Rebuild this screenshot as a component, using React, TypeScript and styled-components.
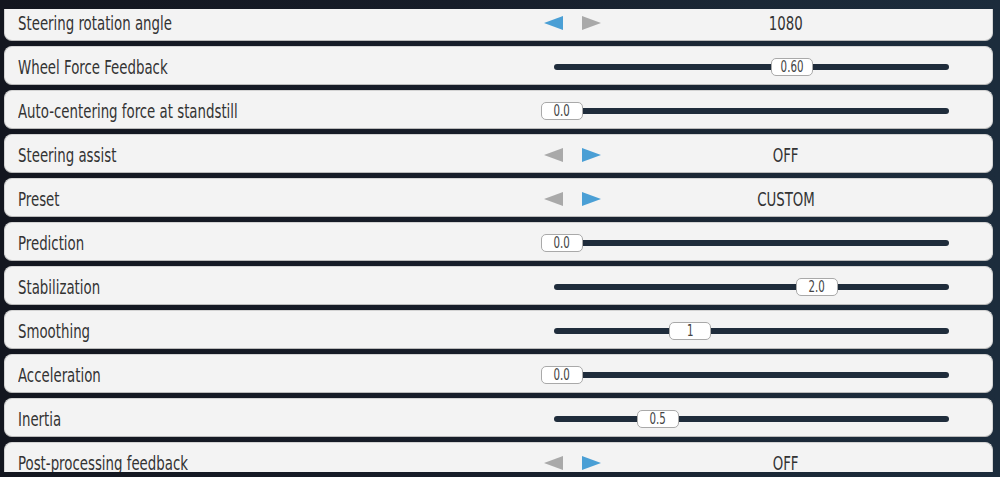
import React from 'react'
import styled, { createGlobalStyle } from 'styled-components'

const GlobalStyle = createGlobalStyle`
  html, body {
    margin: 0;
    padding: 0;
    background: #141821;
  }
`

const Page = styled.div`
  width: 1000px;
  height: 477px;
  box-sizing: border-box;
  padding: 9px 7px 0 4px;
  background: linear-gradient(90deg, #13161f 0%, #171d29 45%, #1b2836 75%, #1c2c3c 100%);
  font-family: 'DejaVu Sans Condensed', 'DejaVu Sans', sans-serif;
  overflow: hidden;
`

const Viewport = styled.div`
  height: 463px;
  overflow: hidden;
`

const List = styled.div`
  display: flex;
  flex-direction: column;
  gap: 5px;
  margin-top: -7px;
`

const Row = styled.div`
  display: flex;
  align-items: center;
  height: 39px;
  box-sizing: border-box;
  padding-left: 13px;
  background: #f3f3f3;
  border: 1px solid #d3d3d3;
  border-bottom-color: #bababa;
  border-radius: 8px;
`

const Label = styled.div`
  width: 523px;
  flex: none;
  padding-top: 4px;
  line-height: 18px;
  white-space: nowrap;
`

const Narrow = styled.span<{ $origin?: string }>`
  display: inline-block;
  font-size: 19px;
  line-height: 18px;
  color: #333333;
  transform: scaleX(0.78);
  transform-origin: ${({ $origin }) => $origin || 'left'} center;
`

const Control = styled.div`
  position: relative;
  width: 420px;
  height: 100%;
  display: flex;
  align-items: center;
`

const Stepper = styled.div`
  display: grid;
  grid-template-columns: 60px 1fr;
  align-items: center;
  width: 100%;
`

const Arrows = styled.div`
  display: flex;
  align-items: center;
  gap: 19px;
  padding-left: 3px;
  padding-top: 2px;
`

const Value = styled.div`
  padding-left: 10px;
  padding-top: 4px;
  line-height: 18px;
  text-align: center;
  white-space: nowrap;
`

const Track = styled.div`
  flex: 1;
  height: 6px;
  margin: 2px 12px 0 13px;
  border-radius: 3px;
  background: #1f2c3b;
`

const Thumb = styled.div`
  position: absolute;
  top: 50%;
  margin-top: -8px;
  width: 42px;
  height: 18px;
  box-sizing: border-box;
  border: 1px solid #a9a9a9;
  border-radius: 5px;
  background: #ffffff;
  display: flex;
  align-items: center;
  justify-content: center;
`

const ThumbText = styled.span`
  display: inline-block;
  padding-top: 1px;
  font-size: 15px;
  line-height: 15px;
  color: #444;
  transform: scaleX(0.76);
`

const Arrow = ({ dir, active }: { dir: 'left' | 'right'; active: boolean }) => (
  <svg width="19" height="14" viewBox="0 0 19 14">
    <polygon
      points={dir === 'left' ? '0,7 19,0 19,14' : '0,0 19,7 0,14'}
      fill={active ? '#4a9fd5' : '#a9a9a9'}
    />
  </svg>
)

type Setting =
  | { label: string; kind: 'step'; value: string; leftActive: boolean }
  | { label: string; kind: 'slider'; value: string; ratio: number }

const settings: Setting[] = [
  { label: 'Steering rotation angle', kind: 'step', value: '1080', leftActive: true },
  { label: 'Wheel Force Feedback', kind: 'slider', value: '0.60', ratio: 0.6 },
  { label: 'Auto-centering force at standstill', kind: 'slider', value: '0.0', ratio: 0 },
  { label: 'Steering assist', kind: 'step', value: 'OFF', leftActive: false },
  { label: 'Preset', kind: 'step', value: 'CUSTOM', leftActive: false },
  { label: 'Prediction', kind: 'slider', value: '0.0', ratio: 0 },
  { label: 'Stabilization', kind: 'slider', value: '2.0', ratio: 2 / 3 },
  { label: 'Smoothing', kind: 'slider', value: '1', ratio: 1 / 3 },
  { label: 'Acceleration', kind: 'slider', value: '0.0', ratio: 0 },
  { label: 'Inertia', kind: 'slider', value: '0.5', ratio: 0.25 },
  { label: 'Post-processing feedback', kind: 'step', value: 'OFF', leftActive: false },
]

const SettingRow = ({ s }: { s: Setting }) => (
  <Row>
    <Label>
      <Narrow>{s.label}</Narrow>
    </Label>
    <Control>
      {s.kind === 'step' ? (
        <Stepper>
          <Arrows>
            <Arrow dir="left" active={s.leftActive} />
            <Arrow dir="right" active={!s.leftActive} />
          </Arrows>
          <Value>
            <Narrow $origin="center">{s.value}</Narrow>
          </Value>
        </Stepper>
      ) : (
        <>
          <Track />
          <Thumb style={{ left: `${Math.round(s.ratio * 383)}px` }}>
            <ThumbText>{s.value}</ThumbText>
          </Thumb>
        </>
      )}
    </Control>
  </Row>
)

const App: React.FC = () => {
  return (
    <Page>
      <GlobalStyle />
      <Viewport>
        <List>
          {settings.map((s) => (
            <SettingRow key={s.label} s={s} />
          ))}
        </List>
      </Viewport>
    </Page>
  )
}

export default App
